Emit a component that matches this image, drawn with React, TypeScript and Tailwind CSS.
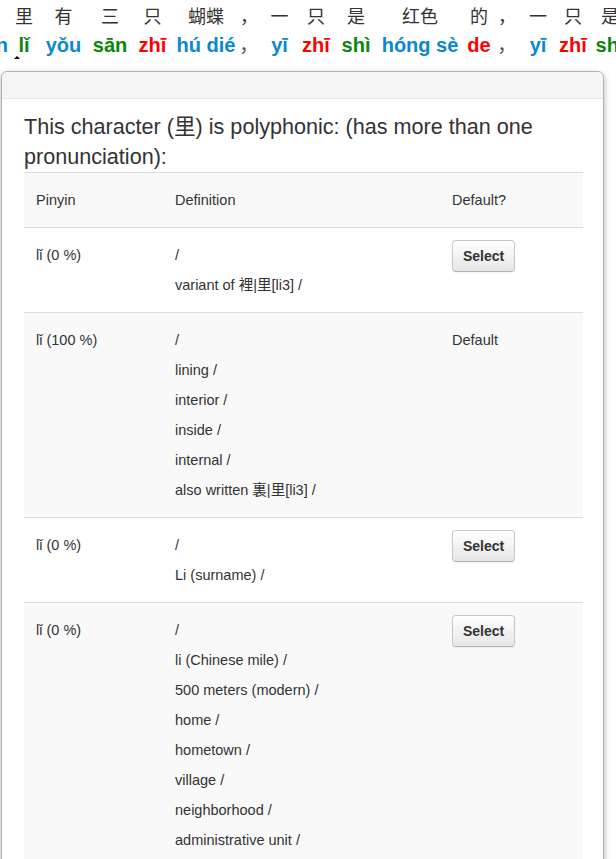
import React from "react";

type Word = { hanzi: string; pinyin: string; color: string; w: string };

const BLUE = "text-[#0a88cf] font-bold";
const GREEN = "text-[#0a870a] font-bold";
const RED = "text-[#ff0000] font-bold";
const PUNCT = "text-[#555] font-normal";

const WORDS: Word[] = [
  { hanzi: "花园", pinyin: "huā yuán", color: BLUE, w: "w-[86px]" },
  { hanzi: "里", pinyin: "lǐ", color: GREEN, w: "w-[34px]" },
  { hanzi: "有", pinyin: "yǒu", color: BLUE, w: "w-[45px]" },
  { hanzi: "三", pinyin: "sān", color: GREEN, w: "w-[48px]" },
  { hanzi: "只", pinyin: "zhī", color: RED, w: "w-[37px]" },
  { hanzi: "蝴蝶", pinyin: "hú dié", color: BLUE, w: "w-[70px]" },
  { hanzi: "，", pinyin: "，", color: PUNCT, w: "w-[16px]" },
  { hanzi: "一", pinyin: "yī", color: BLUE, w: "w-[45px]" },
  { hanzi: "只", pinyin: "zhī", color: RED, w: "w-[28px]" },
  { hanzi: "是", pinyin: "shì", color: GREEN, w: "w-[52px]" },
  { hanzi: "红色", pinyin: "hóng sè", color: BLUE, w: "w-[76px]" },
  { hanzi: "的", pinyin: "de", color: RED, w: "w-[42px]" },
  { hanzi: "，", pinyin: "，", color: PUNCT, w: "w-[14px]" },
  { hanzi: "一", pinyin: "yī", color: BLUE, w: "w-[48px]" },
  { hanzi: "只", pinyin: "zhī", color: RED, w: "w-[22px]" },
  { hanzi: "是", pinyin: "shì", color: GREEN, w: "w-[52px]" },
];

type Reading = { pinyin: string; defs: string[]; isDefault: boolean };

const READINGS: Reading[] = [
  { pinyin: "lǐ (0 %)", defs: ["/", "variant of 裡|里[li3] /"], isDefault: false },
  {
    pinyin: "lǐ (100 %)",
    defs: ["/", "lining /", "interior /", "inside /", "internal /", "also written 裏|里[li3] /"],
    isDefault: true,
  },
  { pinyin: "lǐ (0 %)", defs: ["/", "Li (surname) /"], isDefault: false },
  {
    pinyin: "lǐ (0 %)",
    defs: [
      "/",
      "li (Chinese mile) /",
      "500 meters (modern) /",
      "home /",
      "hometown /",
      "village /",
      "neighborhood /",
      "administrative unit /",
      "classifier for li /",
    ],
    isDefault: false,
  },
];

function SelectButton() {
  return (
    <button className="h-[32px] px-[10px] rounded-[4px] border border-[#c8c8c8] border-b-[#b3b3b3] bg-linear-to-b from-white to-[#e6e6e6] text-[14px] font-bold text-[#333] shadow-[inset_0_1px_0_rgba(255,255,255,0.2),0_1px_2px_rgba(0,0,0,0.05)]">
      Select
    </button>
  );
}

export default function App() {
  return (
    <div className="relative min-h-screen overflow-hidden bg-white font-['Liberation_Sans','Noto_Sans_CJK_SC',sans-serif] text-[#333]">
      {/* sentence behind the dialog */}
      <div className="flex whitespace-nowrap ml-[-79px]">
        {WORDS.map((w, i) => (
          <div key={i} className={`${w.w} shrink-0 flex flex-col items-center`}>
            <span className="h-[30px] leading-[30px] text-[18px] text-[#333] font-['Noto_Sans_CJK_SC',sans-serif]">
              {w.hanzi}
            </span>
            <span className={`h-[30px] leading-[30px] text-[20px] ${w.color}`}>{w.pinyin}</span>
          </div>
        ))}
      </div>
      <span className="absolute left-[14px] top-[56px] w-0 h-0 border-x-[3px] border-b-[3px] border-x-transparent border-b-black" />

      {/* dialog */}
      <div className="absolute left-[1px] top-[71px] w-[603px] rounded-[6px] border border-[#b3b3b3] bg-white shadow-[0_3px_7px_rgba(0,0,0,0.3)]">
        <div className="h-[27px] rounded-t-[6px] bg-[#f5f5f5] border-b border-[#e5e5e5]" />
        <div className="pt-[13px] pl-[22px] pr-[20px] pb-[20px]">
          <h3 className="text-[21.6px] leading-[30px] font-normal">
            This character (里) is polyphonic: (has more than one pronunciation):
          </h3>
          <table className="w-full border-collapse text-[14.5px] leading-[30px]">
            <thead>
              <tr className="bg-[#f9f9f9] border-t border-[#ddd]">
                <th className="w-[139px] px-[12px] py-[12px] text-left font-normal align-top">Pinyin</th>
                <th className="w-[277px] px-[12px] py-[12px] text-left font-normal align-top">Definition</th>
                <th className="px-[12px] py-[12px] text-left font-normal align-top">Default?</th>
              </tr>
            </thead>
            <tbody>
              {READINGS.map((r, i) => (
                <tr key={i} className={`border-t border-[#ddd] ${i % 2 === 1 ? "bg-[#f9f9f9]" : "bg-white"}`}>
                  <td className="px-[12px] py-[12px] align-top">{r.pinyin}</td>
                  <td className="px-[12px] py-[12px] align-top">
                    {r.defs.map((d, j) => (
                      <div key={j}>{d}</div>
                    ))}
                  </td>
                  <td className="px-[12px] py-[12px] align-top">
                    {r.isDefault ? "Default" : <SelectButton />}
                  </td>
                </tr>
              ))}
            </tbody>
          </table>
        </div>
      </div>
    </div>
  );
}
